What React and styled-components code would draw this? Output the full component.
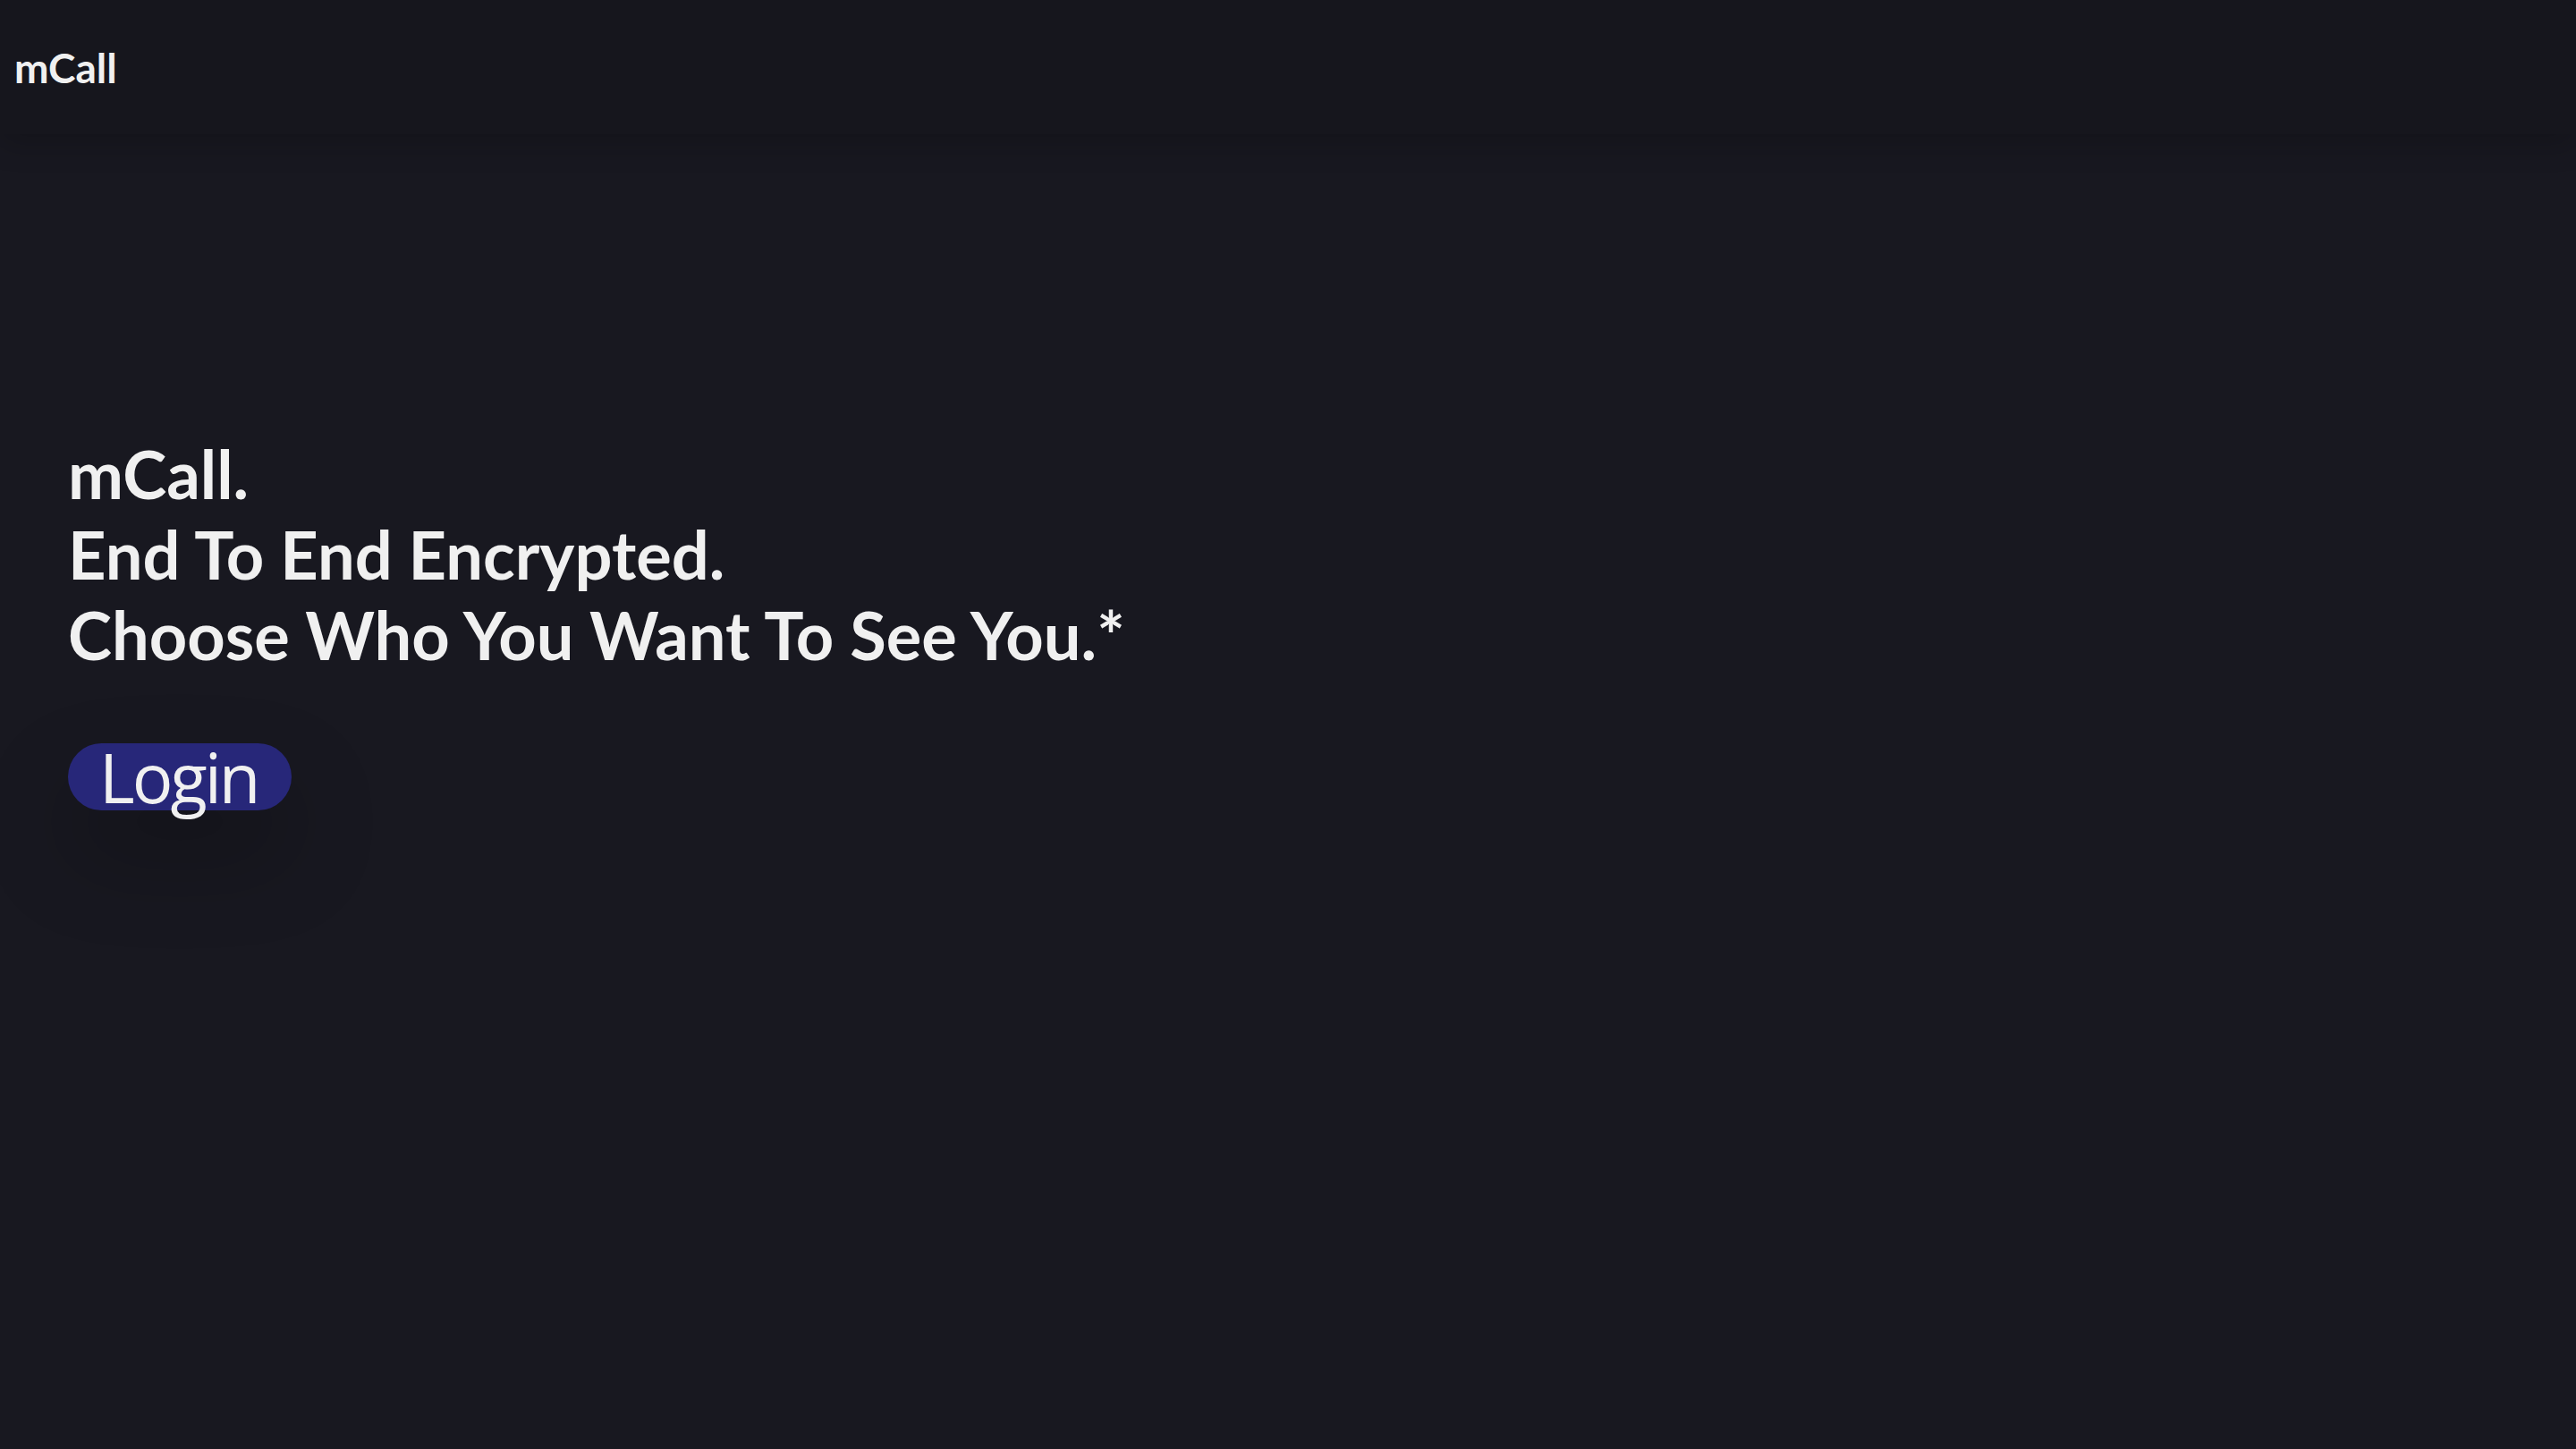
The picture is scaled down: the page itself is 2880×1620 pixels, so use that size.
import styled, { createGlobalStyle } from 'styled-components'

const GlobalStyle = createGlobalStyle`
  html, body {
    margin: 0;
    padding: 0;
    background-color: #181820;
    color: #f0f0f0;
    font-family: Lato, "Noto Sans", sans-serif;
  }

  ::-webkit-scrollbar {
    width: 8px;
    background-color: #181820;
  }

  ::-webkit-scrollbar-thumb {
    background-color: #6b6b70;
    background-clip: padding-box;
    border-left: 1px solid transparent;
    border-right: 2px solid transparent;
  }
`

const App = () => {
  return (
    <Page>
      <GlobalStyle />
      <NavBar>
        <Brand>mCall</Brand>
      </NavBar>
      <Hero>
        <Headline>
          mCall.
          <br />
          End To End Encrypted.
          <br />
          Choose Who You Want To See You.*
        </Headline>
        <LoginButton>Login</LoginButton>
      </Hero>
    </Page>
  )
}

export default App

const Page = styled.div`
  min-height: 1730px;
  display: flex;
  flex-direction: column;
`

const NavBar = styled.nav`
  height: 150px;
  display: flex;
  align-items: center;
  padding: 0 16px;
  background-color: #16161d;
  box-shadow: 0 12px 30px rgba(0, 0, 0, 0.18);
`

const Brand = styled.span`
  font-family: Lato, sans-serif;
  font-weight: 700;
  font-size: 46px;
`

const Hero = styled.main`
  padding: 335px 76px 0;
  display: flex;
  flex-direction: column;
  align-items: flex-start;
`

const Headline = styled.h1`
  margin: 0;
  font-family: Lato, sans-serif;
  font-weight: 700;
  font-size: 74px;
  line-height: 90px;
`

const LoginButton = styled.button`
  margin-top: 76px;
  height: 75px;
  padding: 0 38px 0 35px;
  border: none;
  border-radius: 40px;
  background-color: #272779;
  color: #f0f0f0;
  font-family: "Open Sans", sans-serif;
  font-size: 76px;
  letter-spacing: -3px;
  line-height: 76px;
  display: flex;
  align-items: center;
  box-shadow: 0 50px 100px rgba(0, 0, 0, 0.25);
  cursor: pointer;
`
